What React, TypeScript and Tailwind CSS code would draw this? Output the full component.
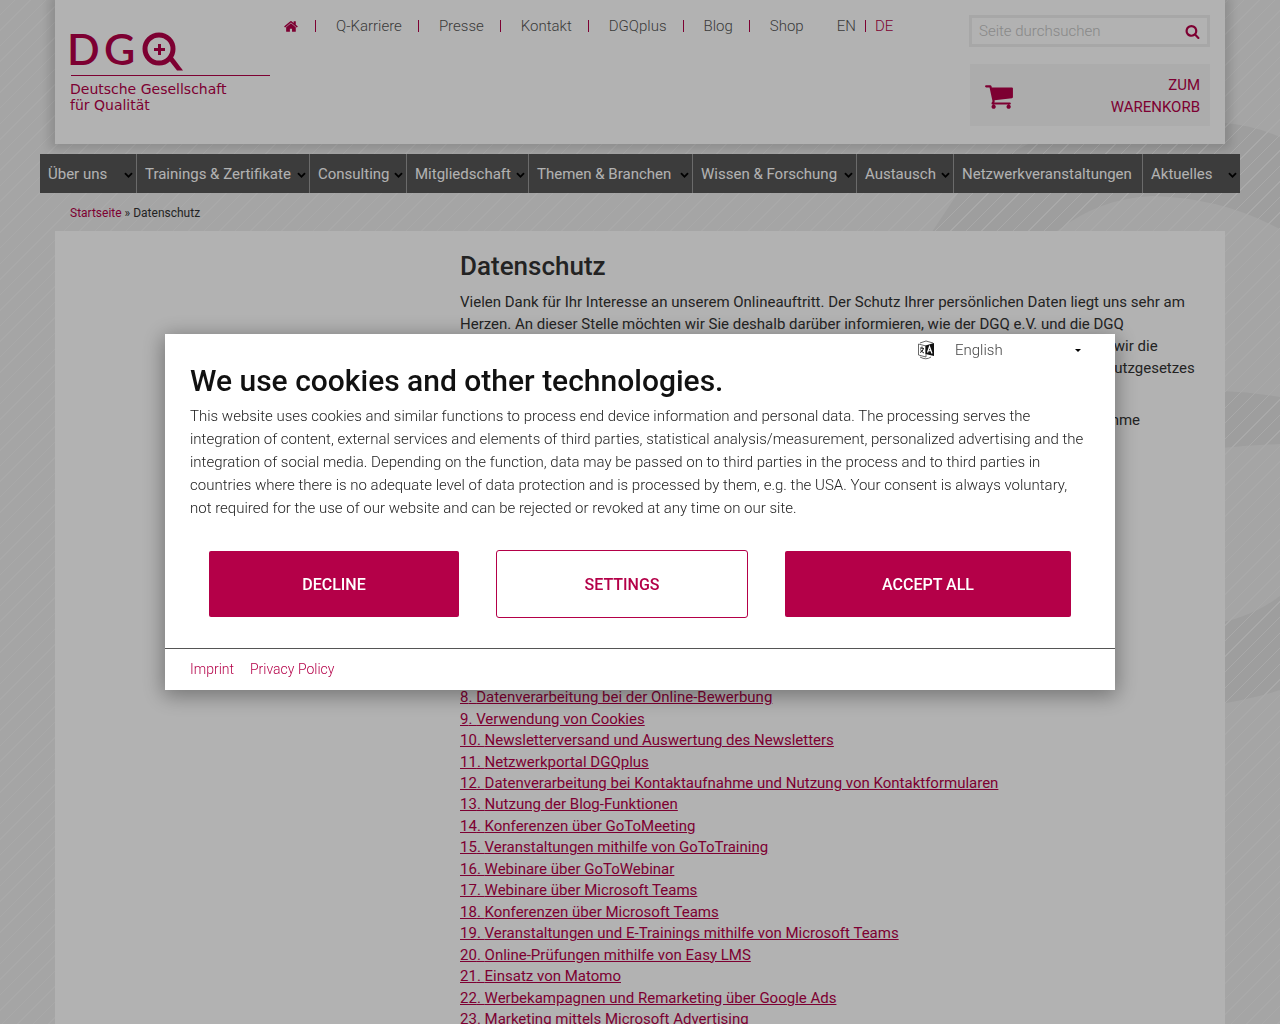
import type { ReactNode } from 'react';

const ICONS = {
  home: 'M1408 992v480q0 26-19 45t-45 19h-384v-384h-256v384h-384q-26 0-45-19t-19-45v-480q0-1 .5-3t.5-3l575-474 575 474q1 2 1 6zm223-69l-62 74q-8 9-21 11h-3q-13 0-21-7l-692-577-692 577q-12 8-24 7-13-2-21-11l-62-74q-8-10-7-23.5t11-21.5l719-599q32-26 76-26t76 26l244 204v-195q0-14 9-23t23-9h192q14 0 23 9t9 23v408l219 182q10 8 11 21.5t-7 23.5z',
  search:
    'M1216 832q0-185-131.5-316.5t-316.5-131.5-316.5 131.5-131.5 316.5 131.5 316.5 316.5 131.5 316.5-131.5 131.5-316.5zm512 832q0 52-38 90t-90 38q-54 0-90-38l-343-342q-179 124-399 124-143 0-273.5-55.5t-225-150-150-225-55.5-273.5 55.5-273.5 150-225 225-150 273.5-55.5 273.5 55.5 225 150 150 225 55.5 273.5q0 220-124 399l343 343q37 37 37 90z',
  cart: 'M704 1536q0 52-38 90t-90 38-90-38-38-90 38-90 90-38 90 38 38 90zm896 0q0 52-38 90t-90 38-90-38-38-90 38-90 90-38 90 38 38 90zm128-1088v512q0 24-16.5 42.5t-40.5 21.5l-1044 122q13 60 13 70 0 16-24 64h920q26 0 45 19t19 45-19 45-45 19h-1024q-26 0-45-19t-19-45q0-11 8-31.5t16-36 21.5-40 15.5-29.5l-177-823h-204q-26 0-45-19t-19-45 19-45 45-19h256q16 0 28.5 6.5t19.5 15.5 13 24.5 8 26 5.5 29.5 4.5 26h1201q26 0 45 19t19 45z',
  chevron:
    'M1683 808l-742 741q-19 19-45 19t-45-19l-742-741q-19-19-19-45.5t19-45.5l166-165q19-19 45-19t45 19l531 531 531-531q19-19 45-19t45 19l166 165q19 19 19 45.5t-19 45.5z',
};

const META_LINKS = ['Q-Karriere', 'Presse', 'Kontakt', 'DGQplus', 'Blog', 'Shop'];

const MAIN_NAV = [
  { label: 'Über uns', sub: true },
  { label: 'Trainings & Zertifikate', sub: true },
  { label: 'Consulting', sub: true },
  { label: 'Mitgliedschaft', sub: true },
  { label: 'Themen & Branchen', sub: true },
  { label: 'Wissen & Forschung', sub: true },
  { label: 'Austausch', sub: true },
  { label: 'Netzwerkveranstaltungen', sub: false },
  { label: 'Aktuelles', sub: true },
];

const TOPICS = [
  'Verantwortliche Stelle',
  'Datenschutzbeauftragter',
  'Ihre Rechte',
  'Zugriffsdaten und Hosting',
  'Datenverarbeitung zur Vertragsabwicklung',
  'Datenverarbeitung bei Mitgliedschaft',
  'Weitergabe von Daten',
  'Datenverarbeitung bei der Online-Bewerbung',
  'Verwendung von Cookies',
  'Newsletterversand und Auswertung des Newsletters',
  'Netzwerkportal DGQplus',
  'Datenverarbeitung bei Kontaktaufnahme und Nutzung von Kontaktformularen',
  'Nutzung der Blog-Funktionen',
  'Konferenzen über GoToMeeting',
  'Veranstaltungen mithilfe von GoToTraining',
  'Webinare über GoToWebinar',
  'Webinare über Microsoft Teams',
  'Konferenzen über Microsoft Teams',
  'Veranstaltungen und E-Trainings mithilfe von Microsoft Teams',
  'Online-Prüfungen mithilfe von Easy LMS',
  'Einsatz von Matomo',
  'Werbekampagnen und Remarketing über Google Ads',
  'Marketing mittels Microsoft Advertising',
];

function Icon({ name, className }: { name: keyof typeof ICONS; className: string }) {
  return (
    <svg viewBox="0 0 1792 1792" className={className} fill="currentColor" aria-hidden="true">
      <path d={ICONS[name]} />
    </svg>
  );
}

function Backdrop() {
  return (
    <div className="absolute inset-0 -z-10 bg-[#ececec]">
      <svg className="absolute top-0 right-0" width="360" height="720" viewBox="0 0 360 720" fill="#e2e2e2">
        <path d="M10 235L38 193Q150 90 305 123Q335 126 360 137V229Q300 197 232 196Q180 198 137 231Z" />
        <path d="M300 391Q330 392 360 397V444Q330 445 300 448Z" />
        <path d="M300 623Q335 615 360 596V690Q335 698 300 704Z" />
      </svg>
      <div className="absolute inset-0 bg-[repeating-linear-gradient(135deg,transparent_0_10px,#f3f3f3_10px_11px)]" />
    </div>
  );
}

function Logo() {
  return (
    <a href="#" className="block w-[200px] pt-8 text-[#b40048]">
      <svg className="overflow-visible" width="200" height="44" viewBox="0 0 200 44" fill="none" stroke="currentColor">
        <text x="-3" y="33" fontSize="43" fontWeight="600" fill="currentColor" stroke="none" fontFamily="Lato">
          D
        </text>
        <text x="34" y="33" fontSize="43" fontWeight="600" fill="currentColor" stroke="none" fontFamily="Lato">
          G
        </text>
        <circle cx="89" cy="17" r="14" strokeWidth="5" />
        <path d="M84 17.500h11M89.500 12v11" strokeWidth="3" />
        <path d="M98 27l4-3 11 14.500h-6z" fill="currentColor" stroke="none" />
        <path d="M1 43.500h199" />
      </svg>
      <span className="mt-[5px] block font-['DejaVu_Sans',sans-serif] text-[14px] leading-4 whitespace-nowrap">
        Deutsche Gesellschaft
        <br />
        für Qualität
      </span>
    </a>
  );
}

function MetaItem({ children }: { children: ReactNode }) {
  return (
    <li className="flex items-center">
      {children}
      <span className="mr-5 ml-4 h-3 w-px bg-[#b40048]" />
    </li>
  );
}

function Header() {
  return (
    <header className="mx-auto flex h-36 max-w-[1170px] bg-white px-[15px] shadow-[0_0_10px_5px_rgba(0,0,0,0.15)]">
      <Logo />
      <nav className="ml-[14px] flex h-[52px] flex-1 items-center text-[15px] font-light text-[#555]">
        <ul className="flex">
          <MetaItem>
            <a href="#" aria-label="Startseite" className="text-[#b40048]">
              <Icon name="home" className="size-[15px]" />
            </a>
          </MetaItem>
          {META_LINKS.slice(0, -1).map(label => (
            <MetaItem key={label}>
              <a href="#">{label}</a>
            </MetaItem>
          ))}
          <li>
            <a href="#">{META_LINKS[META_LINKS.length - 1]}</a>
          </li>
        </ul>
        <div className="ml-[33px] flex items-center gap-[9px]">
          <a href="#">EN</a>
          <span className="h-3 w-px bg-[#b40048]" />
          <a href="#" className="text-[#b40048]">DE</a>
        </div>
      </nav>
      <div className="w-[241px] pt-[15px]">
        <form className="flex h-8 items-center border-[3px] border-[#efefef] pt-px pr-[7px] pl-[7px]">
          <input
            type="search"
            aria-label="Seite durchsuchen"
            placeholder="Seite durchsuchen"
            className="min-w-0 flex-1 text-[15px] font-light outline-none placeholder:text-[#c4c4c4]"
          />
          <button type="button" aria-label="Suchen" className="text-[#b40048]">
            <Icon name="search" className="size-[15px]" />
          </button>
        </form>
        <a
          href="#"
          className="mt-[17px] ml-px flex h-[62px] items-center justify-between bg-[#f6f6f6] pt-px pr-2.5 pl-[14px] text-[15px] leading-[22px] text-[#b40048]"
        >
          <Icon name="cart" className="size-[30px]" />
          <span className="w-24 text-right">ZUM WARENKORB</span>
        </a>
      </div>
    </header>
  );
}

function MainNav() {
  return (
    <nav className="relative mx-auto mt-2.5 max-w-[1200px] bg-[#565656] text-[15px] text-white">
      <ul className="grid h-[39px] grid-cols-[97fr_173fr_97fr_122fr_164fr_164fr_97fr_189fr_97fr]">
        {MAIN_NAV.map(item => (
          <li key={item.label} className="border-r border-[#9a9a9a] last:border-r-0">
            <a href="#" className="flex h-full items-center justify-between pt-px pr-[3px] pl-2 whitespace-nowrap">
              {item.label}
              {item.sub && <Icon name="chevron" className="size-[9px] shrink-0 text-black" />}
            </a>
          </li>
        ))}
      </ul>
    </nav>
  );
}

function LanguageIcon() {
  return (
    <svg width="18" height="20" viewBox="0 0 18 20" aria-hidden="true">
      <path d="M1.500 4L9 6v11L1.500 15zM3 3l6-2 7 2M3 17q6 3.500 11 0" fill="none" stroke="#444" strokeWidth=".8" />
      <path d="M8.500 5.500L17 3v13l-8.500-2z" fill="#111" />
      <path d="M3 8l4 .5M5 6.500V8M6.500 8.500Q5.500 12 3 12.500M3.500 9.500q1.500 3 3.500 3.500" fill="none" stroke="#222" />
      <path d="M10.500 12.500l2-6 2.500 7M11.500 10.500l3 .5" fill="none" stroke="#fff" strokeWidth="1.200" />
    </svg>
  );
}

function CookieDialog() {
  return (
    <div className="fixed inset-0 z-10 flex items-center justify-center bg-black/30">
      <section
        role="dialog"
        aria-labelledby="cookie-title"
        className="w-full max-w-[950px] bg-white shadow-[0_4px_20px_2px_rgba(0,0,0,0.35)]"
      >
        <div className="flex h-8 items-center justify-end pr-[30px]">
          <LanguageIcon />
          <div className="relative ml-5 flex items-center">
            <select aria-label="Language" className="w-[130px] appearance-none text-[15px] font-light text-[#444]">
              <option>English</option>
              <option>Deutsch</option>
            </select>
            <span className="pointer-events-none absolute right-1 border-x-[3px] border-t-[3px] border-x-transparent border-t-black" />
          </div>
        </div>
        <div className="px-[25px]">
          <h2 id="cookie-title" className="text-[30px] leading-[30px] font-medium text-[#111]">
            We use cookies and other technologies.
          </h2>
          <p className="mt-[9px] text-[15px] leading-[23px] font-light text-[#222]">
            This website uses cookies and similar functions to process end device information and personal data. The
            processing serves the integration of content, external services and elements of third parties, statistical
            analysis/measurement, personalized advertising and the integration of social media. Depending on the
            function, data may be passed on to third parties in the process and to third parties in countries where
            there is no adequate level of data protection and is processed by them, e.g. the USA. Your consent is
            always voluntary, not required for the use of our website and can be rejected or revoked at any time on
            our site.
          </p>
          <div className="mx-[18px] mt-[30px] grid grid-cols-[252fr_252fr_288fr] gap-9 font-medium">
            <button type="button" className="h-[68px] rounded-[3px] border border-transparent bg-[#b40048] bg-clip-padding pt-0.5 text-white">
              DECLINE
            </button>
            <button type="button" className="h-[68px] rounded-[3px] border border-[#b40048] bg-white pt-0.5 text-[#b40048]">
              SETTINGS
            </button>
            <button type="button" className="h-[68px] rounded-[3px] border border-transparent bg-[#b40048] bg-clip-padding pt-0.5 text-white">
              ACCEPT ALL
            </button>
          </div>
        </div>
        <footer className="mt-[30px] flex h-[42px] items-center gap-4 border-t border-[#555] px-[25px] pb-0.5 text-sm font-light text-[#b40048]">
          <a href="#">Imprint</a>
          <a href="#">Privacy Policy</a>
        </footer>
      </section>
    </div>
  );
}

export default function App() {
  return (
    <div className="relative isolate h-screen overflow-hidden font-[Roboto,sans-serif] text-[#333]">
      <Backdrop />
      <Header />
      <MainNav />
      <div className="mx-auto h-[38px] max-w-[1170px] px-[15px] text-xs leading-10">
        <a href="#" className="text-[#b40048]">Startseite</a> » Datenschutz
      </div>
      <main className="mx-auto max-w-[1170px] bg-white pt-5 pr-[15px] pl-[405px] text-[15px]">
        <h1 className="text-[26px] leading-[30px] font-medium">Datenschutz</h1>
        <p className="mt-2.5 leading-[22px]">
          Vielen Dank für Ihr Interesse an unserem Onlineauftritt. Der Schutz Ihrer persönlichen Daten liegt uns sehr
          am Herzen. An dieser Stelle möchten wir Sie deshalb darüber informieren, wie der DGQ e.V. und die DGQ
          Weiterbildung GmbH alle Ihre personenbezogenen Daten verarbeiten. Selbstverständlich beachten wir die
          Bestimmungen der Datenschutzgrundverordnung (DSGVO), des neuen deutschen Bundesdatenschutzgesetzes (BDSG)
          und anderer Vorschriften.
        </p>
        <p className="mt-2 leading-[22px]">
          Im Folgenden erläutern wir Ihnen, welche Daten wir erheben, wie wir sie nutzen und welche Maßnahme
          datenschutzrechtlich notwendig ist.
        </p>
        <ul className="mt-[84px] flex min-h-[493px] flex-col justify-between leading-[21px] text-[#b40048] underline">
          {TOPICS.map((topic, i) => (
            <li key={topic}>
              <a href="#">
                {i + 1}. {topic}
              </a>
            </li>
          ))}
        </ul>
      </main>
      <CookieDialog />
    </div>
  );
}
